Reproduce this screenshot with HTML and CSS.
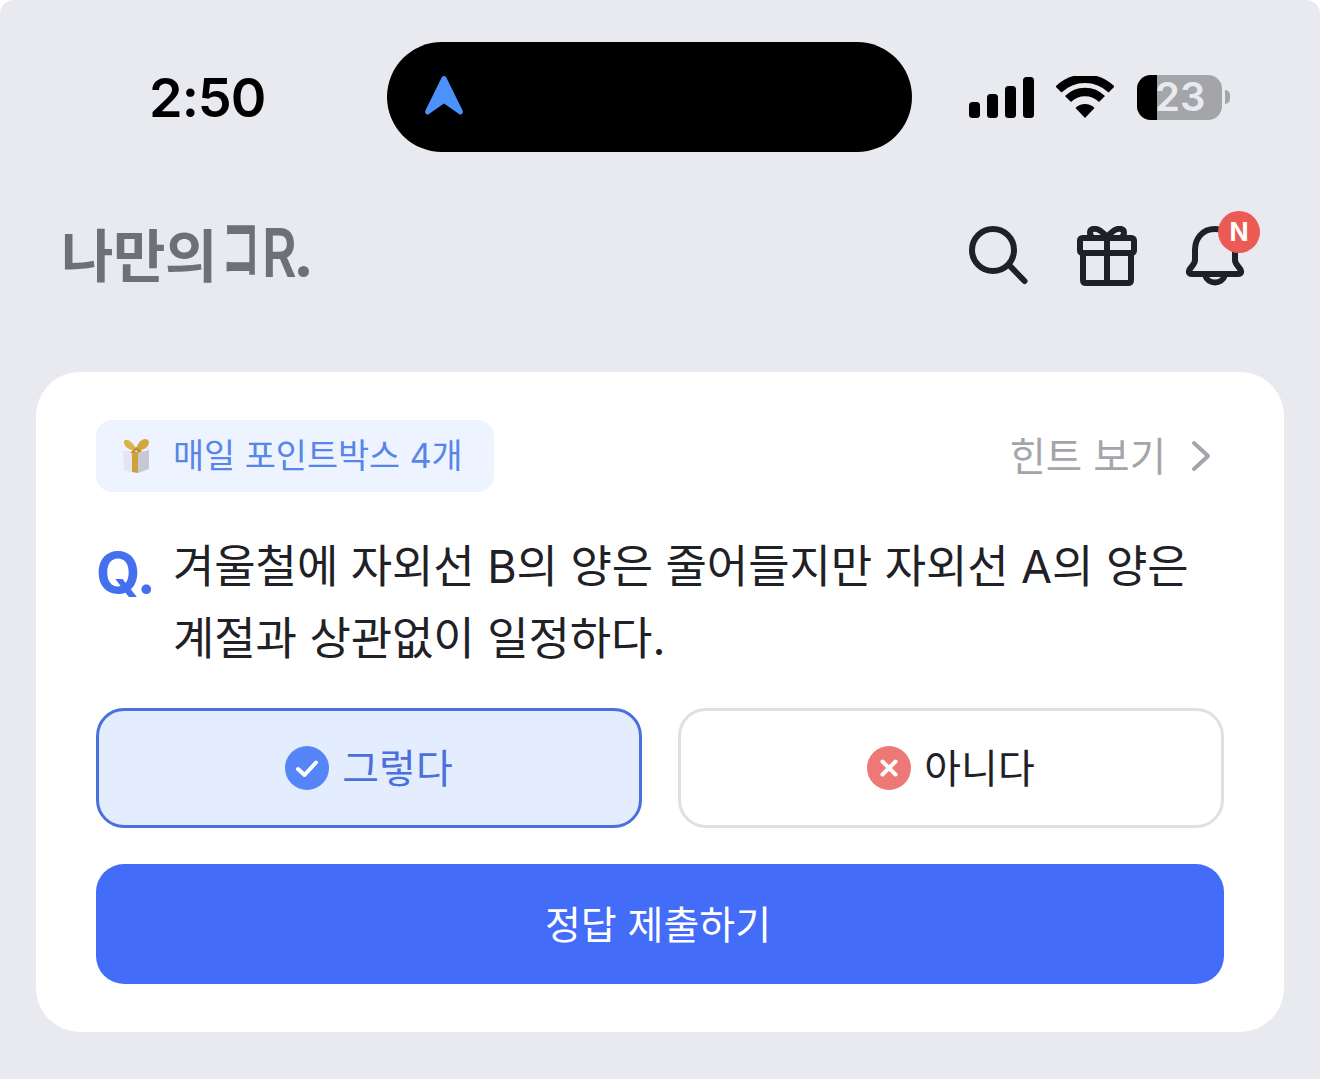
FILE: index.html
```html
<!DOCTYPE html>
<html lang="ko">
<head>
<meta charset="utf-8">
<title>나만의 코R</title>
<link rel="stylesheet" href="styles.css">
</head>
<body>
<div class="screen">
  <div class="status">
    <div class="time">2:50</div>
    <div class="island">
      <svg class="nav-arrow" width="40" height="42" viewBox="0 0 40 42"><path d="M20 2 C21.500 2 22.300 3 22.800 4.500 L38.600 36.500 C39.600 39.500 37.500 41.500 35 40 L20 29.500 L5 40 C2.500 41.500 .4 39.500 1.400 36.500 L17.200 4.500 C17.700 3 18.500 2 20 2Z" fill="#4b93fb"/></svg>
    </div>
    <div class="status-right">
      <div class="signal"><span class="bar b1"></span><span class="bar b2"></span><span class="bar b3"></span><span class="bar b4"></span></div>
      <svg class="wifi" width="58" height="42" viewBox="0 0 58 42"><path d="M2.500 13.500 A38 38 0 0 1 55.500 13.500" fill="none" stroke="#000" stroke-width="8.500"/><path d="M12 23 A24 24 0 0 1 46 23" fill="none" stroke="#000" stroke-width="8.500"/><path d="M19.500 32 A13.500 13.500 0 0 1 38.500 32 L29 42Z" fill="#000"/></svg>
      <div class="battery"><div class="battery-fill"></div><span class="battery-num">23</span></div>
      <div class="battery-nub"></div>
    </div>
  </div>

  <header class="topbar">
    <div class="logo"><span class="logo-ko">나만의</span><span class="logo-mark">コ</span><span class="logo-r">R</span><span class="logo-dot"></span></div>
    <div class="top-icons">
      <svg class="icon" width="60" height="60" viewBox="0 0 60 60"><circle cx="24" cy="24" r="21" fill="none" stroke="#1f2126" stroke-width="6"/><path d="M41 40 L55.500 55" fill="none" stroke="#1f2126" stroke-width="6" stroke-linecap="round"/></svg>
      <svg class="icon" width="60" height="60" viewBox="0 0 60 60"><g fill="none" stroke="#1f2126" stroke-width="6" stroke-linejoin="round"><rect x="3" y="12" width="54" height="15" rx="2.500"/><path d="M6 27 V54 Q6 57 9 57 H51 Q54 57 54 54 V27"/><path d="M30 12 V57"/><path d="M30 12 C26 5 20 2 16 3 C12 4 12 9 16 12"/><path d="M30 12 C34 5 40 2 44 3 C48 4 48 9 44 12"/></g></svg>
      <div class="bell-wrap">
        <svg class="icon" width="60" height="60" viewBox="0 0 60 60"><g fill="none" stroke="#1f2126" stroke-width="6" stroke-linejoin="round"><path d="M30 3 C17 3 10 13 10 24 V34 C10 39 5 41 4 45 C3.500 47.500 5 48 7 48 H53 C55 48 56.500 47.500 56 45 C55 41 50 39 50 34 V24 C50 13 43 3 30 3Z"/><path d="M20 49 C23 59 37 59 40 49"/></g></svg>
        <span class="badge">N</span>
      </div>
    </div>
  </header>

  <main class="card">
    <div class="card-top">
      <div class="chip">
        <svg class="gift" width="28" height="36" viewBox="0 0 28 36"><path d="M1 13 L25 10 L27 14 L27 31 L14 35 L2 32Z" fill="#e4e5ee"/><path d="M16 14 L27 12 L27 31 L16 35Z" fill="#c6c8d4"/><path d="M1 12 L13 9 L27 12 L15 15Z" fill="#f4f4f6"/><path d="M10 13 L16 14 V35 L10 34Z" fill="#cda23e"/><path d="M14 11 C9 0 1 0 2 5 C3 10 9 13 14 12Z" fill="#dcb24c"/><path d="M14 11 C17 0 26 -1 27 4 C27 10 20 13 14 12Z" fill="#d5a83f"/><path d="M14 9 L8 15 L12 15 L14 12 L17 15 L20 13Z" fill="#bd9032"/></svg>
        <span class="chip-text">매일 포인트박스 4개</span>
      </div>
      <div class="hint">
        <span class="hint-label">힌트 보기</span>
        <svg width="20" height="32" viewBox="0 0 20 32"><path d="M3 3 L17 16 L3 29" fill="none" stroke="#a4a5ab" stroke-width="4" stroke-linecap="round" stroke-linejoin="round"/></svg>
      </div>
    </div>

    <div class="question">
      <span class="q-mark">Q.</span>
      <p class="q-text">겨울철에 자외선 B의 양은 줄어들지만 자외선 A의 양은 계절과 상관없이 일정하다.</p>
    </div>

    <div class="choices">
      <button class="choice choice-on">
        <svg width="44" height="44" viewBox="0 0 44 44"><circle cx="22" cy="22" r="22" fill="#5585f6"/><path d="M13 23 L19.500 29 L31 16.500" fill="none" stroke="#fff" stroke-width="4" stroke-linecap="round" stroke-linejoin="round"/></svg>
        <span class="choice-label">그렇다</span>
      </button>
      <button class="choice">
        <svg width="44" height="44" viewBox="0 0 44 44"><circle cx="22" cy="22" r="22" fill="#ee7875"/><path d="M15.500 15.500 L28.500 28.500 M28.500 15.500 L15.500 28.500" fill="none" stroke="#fff" stroke-width="4" stroke-linecap="round"/></svg>
        <span class="choice-label">아니다</span>
      </button>
    </div>

    <button class="submit"><span class="submit-label">정답 제출하기</span></button>
  </main>
</div>
</body>
</html>
```

FILE: styles.css
```css
* { box-sizing: border-box; }
html, body { margin: 0; padding: 0; background: #fff; }
body { font-family: Inter, "Noto Sans CJK KR", "Noto Sans", sans-serif; }

.screen {
  width: 1320px;
  height: 1079px;
  background: #e9eaef;
  border-radius: 14px 14px 0 0;
  overflow: hidden;
}

/* status bar */
.status {
  display: flex;
  align-items: center;
  height: 152px;
  padding: 42px 0 0 149px;
}
.time {
  width: 238px;
  font-family: Inter, "Liberation Sans", sans-serif;
  font-size: 54px;
  font-weight: 600;
  letter-spacing: -1px;
  color: #000;
  line-height: 1;
  position: relative;
  top: 1px;
}
.island {
  width: 525px;
  height: 110px;
  background: #000;
  border-radius: 55px;
  display: flex;
  align-items: center;
  padding: 0 0 4px 37px;
}
.status-right {
  display: flex;
  align-items: center;
  margin-left: 57px;
}
.signal { display: flex; align-items: flex-end; gap: 7px; height: 42px; }
.bar { width: 11px; background: #000; border-radius: 3.500px; }
.b1 { height: 16px; }
.b2 { height: 24px; }
.b3 { height: 32px; }
.b4 { height: 41px; }
.wifi { margin-left: 22px; }
.battery {
  position: relative;
  width: 85px;
  height: 45px;
  margin-left: 23px;
  background: #a4a5a9;
  border-radius: 14px;
  display: flex;
  align-items: center;
  padding-left: 18px;
}
.battery-fill {
  position: absolute;
  left: 0;
  top: 0;
  bottom: 0;
  width: 20px;
  background: #000;
  border-radius: 14px 0 0 14px;
}
.battery-num {
  position: relative;
  font-family: Inter, "Liberation Sans", sans-serif;
  font-size: 40px;
  font-weight: 600;
  line-height: 1;
  color: #e9eaef;
}
.battery-nub {
  width: 5px;
  height: 14px;
  margin-left: 3px;
  background: #a4a5a9;
  border-radius: 0 5px 5px 0;
}

/* header */
.topbar {
  display: flex;
  align-items: center;
  justify-content: space-between;
  height: 220px;
  padding: 0 75px 12px 61px;
}
.logo {
  display: flex;
  align-items: baseline;
  line-height: 60px;
  color: #6e7076;
  font-family: "Noto Sans CJK KR", sans-serif;
  position: relative;
  top: -6px;
}
.logo-ko {
  font-size: 57px;
  font-weight: 700;
  letter-spacing: -.5px;
}
.logo-mark {
  display: inline-block;
  font-size: 67px;
  font-weight: 700;
  margin-left: 4px;
  letter-spacing: -34px;
  transform: translateY(-4px) scaleX(.58);
  transform-origin: left;
}
.logo-r {
  display: inline-block;
  font-family: Inter, sans-serif;
  font-size: 68px;
  font-weight: 600;
  margin-left: 8px;
  width: 36px;
  transform: scaleX(.78);
  transform-origin: left;
}
.logo-dot {
  width: 11px;
  height: 11px;
  border-radius: 50%;
  background: #6e7076;
}
.top-icons { display: flex; gap: 48px; }
.icon { display: block; }
.bell-wrap { position: relative; width: 60px; height: 60px; }
.badge {
  position: absolute;
  left: 33px;
  top: -15px;
  width: 42px;
  height: 42px;
  border-radius: 50%;
  background: #eb5a55;
  color: #fff;
  font-size: 25px;
  font-weight: 700;
  line-height: 42px;
  text-align: center;
}

/* card */
.card {
  width: 1248px;
  height: 660px;
  margin: 0 36px;
  padding: 48px 60px;
  background: #fff;
  border-radius: 44px;
  display: flex;
  flex-direction: column;
}
.card-top {
  display: flex;
  align-items: center;
  justify-content: space-between;
  height: 72px;
}
.chip {
  display: flex;
  align-items: center;
  gap: 23px;
  height: 72px;
  width: 398px;
  padding-left: 26px;
  background: #edf4ff;
  border-radius: 16px;
}
.gift { flex: none; }
.chip-text {
  font-size: 33.800px;
  line-height: 1;
  color: #5786e8;
}
.hint {
  display: flex;
  align-items: center;
  gap: 25px;
  padding-right: 13px;
  font-size: 39.500px;
  line-height: 1;
  color: #a4a5ab;
}
.hint-label { padding-top: 4px; }
.question {
  display: flex;
  margin-top: 39px;
  height: 144px;
}
.q-mark {
  width: 77px;
  flex: none;
  font-size: 57px;
  font-weight: 700;
  line-height: 72px;
  letter-spacing: -1px;
  color: #4470ef;
  position: relative;
  top: 6px;
}
.q-text {
  margin: 0;
  width: 1030px;
  font-size: 45px;
  line-height: 72px;
  letter-spacing: -.1px;
  color: #1f2126;
}
.choices {
  display: flex;
  gap: 36px;
  margin-top: 33px;
}
.choice {
  flex: 1;
  height: 120px;
  display: flex;
  align-items: center;
  justify-content: center;
  gap: 13px;
  background: #fff;
  border: 3px solid #dfe0e3;
  border-radius: 28px;
  font-family: inherit;
  font-size: 40px;
  color: #1f2126;
  padding: 0;
}
.choice-label { padding-bottom: 4px; }
.choice-on {
  background: #e3edfd;
  border-color: #4a70dc;
  color: #4a70dc;
}
.submit {
  display: block;
  width: 100%;
  height: 120px;
  margin-top: 36px;
  background: #436cf8;
  border: 0;
  border-radius: 28px;
  font-family: inherit;
  font-size: 39px;
  color: #fff;
  padding: 0 4px 0 0;
}
.submit-label { display: inline-block; padding-bottom: 4px; }
```
